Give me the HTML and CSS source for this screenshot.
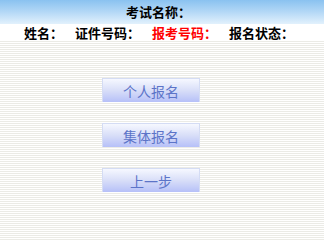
FILE: index.html
```html
<!DOCTYPE html>
<html>
<head>
<meta charset="utf-8">
<link rel="stylesheet" href="styles.css">
</head>
<body>
<div class="page">
  <div class="title">考试名称：</div>
  <div class="info">
    <span class="field">姓名：</span>
    <span class="field">证件号码：</span>
    <span class="field red">报考号码：</span>
    <span class="field">报名状态：</span>
  </div>
  <div class="actions">
    <button class="btn">个人报名</button>
    <button class="btn">集体报名</button>
    <button class="btn">上一步</button>
  </div>
</div>
</body>
</html>
```
FILE: styles.css
```css
html, body {
  margin: 0;
  padding: 0;
}
body {
  width: 324px;
  height: 208px;
  overflow: hidden;
  font-family: "Noto Sans CJK SC", "Liberation Sans", sans-serif;
  background: repeating-linear-gradient(to bottom, #ffffff 0, #ffffff 1px, #ebebe6 1px, #ebebe6 2px);
}
.page {
  display: flex;
  flex-direction: column;
}
.title {
  height: 24px;
  line-height: 24px;
  text-align: center;
  padding-right: 7px;
  font-size: 13px;
  font-weight: bold;
  color: #000;
  background: linear-gradient(to bottom, #8ac2f0 0%, #b4d8f6 50%, #e2f1fc 100%);
}
.info {
  height: 17px;
  background: #fff;
  display: flex;
  gap: 12px;
  padding-left: 24px;
  align-items: center;
  font-size: 13px;
  font-weight: bold;
  line-height: 17px;
  color: #000;
}
.red {
  color: #ff0000;
}
.actions {
  display: flex;
  flex-direction: column;
  align-items: flex-start;
  gap: 21px;
  padding-top: 37px;
  padding-left: 102px;
}
.btn {
  width: 98px;
  height: 24px;
  margin: 0;
  padding: 0;
  border: 1px solid #d4dcf4;
  border-bottom: none;
  background: linear-gradient(to bottom, #f6f8ff 0%, #d8def8 50%, #b6c0f8 100%);
  color: #5c74c8;
  font-family: "Noto Sans CJK SC", "Liberation Sans", sans-serif;
  font-size: 14px;
  line-height: 22px;
}
```
